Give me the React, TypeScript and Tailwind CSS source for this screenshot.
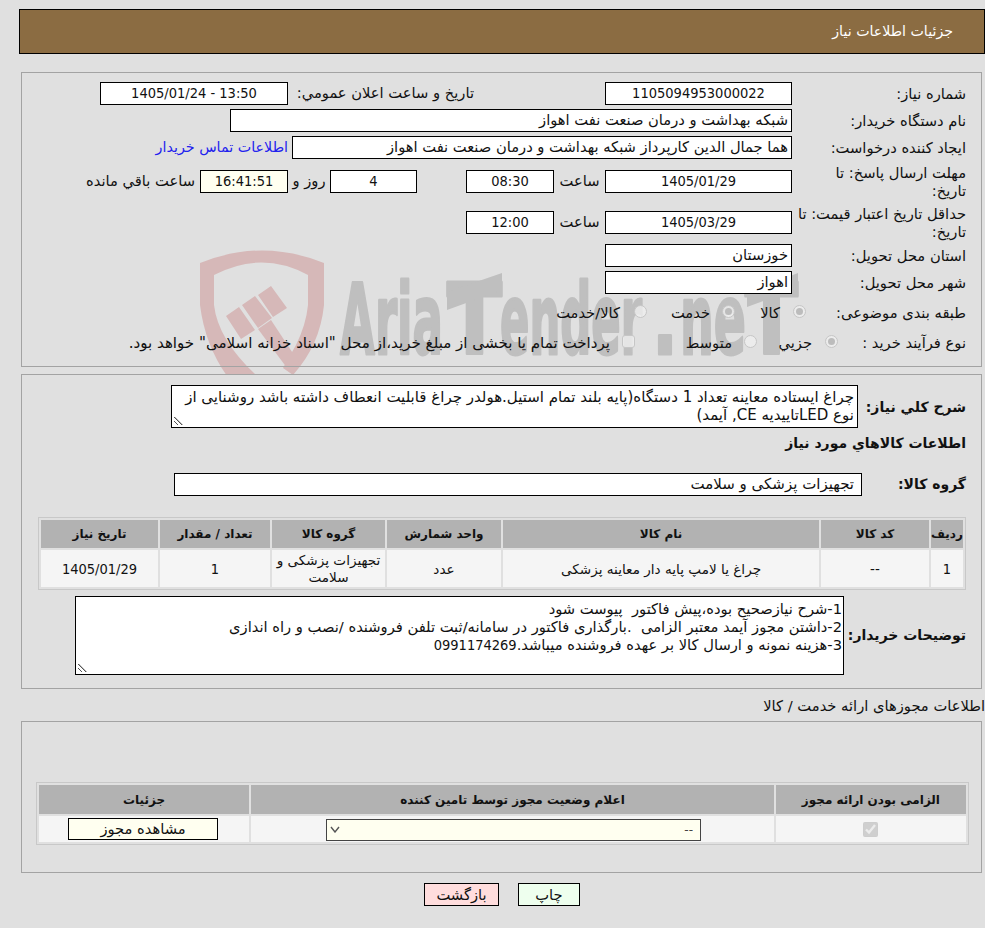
import type { ReactNode } from "react";

const digits = "[font-stretch:condensed] text-[14.5px]";
const boldLabel = "font-bold text-[14px]";

function Box({ w, children, bg = "bg-white", align = "text-center", num }: { w: string; children?: ReactNode; bg?: string; align?: string; num?: boolean }) {
  return (
    <div className={`${w} h-[23px] shrink-0 border border-black ${bg} ${align} ${num ? digits : ""} px-[3px] leading-[20px] whitespace-nowrap overflow-hidden`}>
      {children}
    </div>
  );
}

function Label({ children }: { children: ReactNode }) {
  return <div className="w-[189px] shrink-0 pr-[15px] leading-[18px] whitespace-nowrap">{children}</div>;
}

function Radio({ on, square }: { on?: boolean; square?: boolean }) {
  return (
    <span className={`w-[13px] h-[13px] mb-[3px] shrink-0 border border-[#c6c6c6] bg-[#efefef]/80 flex items-center justify-center ${square ? "rounded-[3px]" : "rounded-full"}`}>
      {on && <span className="w-[7px] h-[7px] rounded-full bg-[#bcbcbc]" />}
    </span>
  );
}

function Grip() {
  return (
    <svg className="absolute left-px bottom-px" width="11" height="11" viewBox="0 0 11 11">
      <path d="M1 2 L9 10 M1 6 L5 10" stroke="#555" strokeWidth="1" />
      <path d="M2 2 L10 10" stroke="#bbb" strokeWidth="1" />
    </svg>
  );
}

function Watermark() {
  const font = {
    fill: "#bfbfbf",
    stroke: "#bfbfbf",
    strokeWidth: 3,
    strokeLinejoin: "round" as const,
    fontFamily: "'DejaVu Sans', sans-serif",
    fontWeight: "bold",
    fontSize: 98,
    lengthAdjust: "spacingAndGlyphs" as const,
  };
  return (
    <svg className="absolute left-0 top-0 z-0 [direction:ltr]" width="985" height="400" viewBox="0 0 985 400">
      {/* shield */}
      <path
        d="M200 263 Q262 238 324 263 L324 305 Q320 345 293 375 L283 368 L296 345 Q306 325 308 305 L308 275 Q262 250 214 275 L214 305 Q218 340 257 376 L227 376 Q205 345 200 305 Z"
        fill="#d6b8b8"
      />
      {/* gavel */}
      <path d="M226 316 L239 307 L255 330 L241 339 Z M242 305 L255 296 L272 318 L258 328 Z M258 295 L271 286 L287 308 L273 317 Z" fill="#d6b8b8" />
      <path d="M258 329 L271 320 L300 364 L290 372 Z" fill="#d6b8b8" />
      <text x="340" y="354" textLength="103" {...font}>Aria</text>
      <text x="447" y="354" textLength="55" {...font}>T</text>
      <text x="500" y="354" textLength="142" {...font}>ender</text>
      <text x="652" y="354" textLength="26" {...font}>.</text>
      <text x="680" y="354" textLength="66" {...font}>ne</text>
      <text x="745" y="354" textLength="53" {...font}>T</text>
      <path d="M447 292 L502 273 L502 290 L447 310 Z M747 293 L798 273 L798 288 L747 307 Z" fill="#bfbfbf" />
    </svg>
  );
}

const headers = [
  { t: "رديف", w: "w-[32px]" },
  { t: "کد کالا", w: "w-[108px]" },
  { t: "نام کالا", w: "w-[316px]" },
  { t: "واحد شمارش", w: "w-[114px]" },
  { t: "گروه کالا", w: "w-[113px]" },
  { t: "تعداد / مقدار", w: "w-[110px]" },
  { t: "تاریخ نیاز", w: "w-[117px]" },
];
const row = ["1", "--", "چراغ یا لامپ پایه دار معاینه پزشکی", "عدد", "تجهیزات پزشکی و سلامت", "1", "1405/01/29"];

export default function App() {
  return (
    <div dir="rtl" className="relative w-[985px] h-[928px] overflow-hidden bg-[#e0e0e0] text-[14.7px] text-[#111] [font-family:'DejaVu_Sans',sans-serif]">
      <Watermark />

      <div className="relative z-10 h-[45px] mt-[9px] ml-[19px] border border-black bg-[#8b6c42] text-white text-[14.2px] flex items-center pr-[31px]">
        جزئیات اطلاعات نیاز
      </div>

      {/* main info */}
      <div className="relative z-10 mt-[18px] ml-[21px] mr-[3px] h-[295px] border border-[#a3a3a3] pt-[9px]">
        <div className="flex items-center h-[23px]">
          <Label>شماره نیاز:</Label>
          <Box w="w-[187px]" num>1105094953000022</Box>
          <div className="mr-[131px] ml-[5px] whitespace-nowrap w-[181px]">تاریخ و ساعت اعلان عمومي:</div>
          <Box w="w-[188px]" num>13:50 - 1405/01/24</Box>
        </div>
        <div className="flex items-center h-[23px] mt-[4px]">
          <Label>نام دستگاه خریدار:</Label>
          <Box w="w-[562px]" align="text-right">شبکه بهداشت و درمان صنعت نفت اهواز</Box>
        </div>
        <div className="flex items-center h-[23px] mt-[4px]">
          <Label>ایجاد کننده درخواست:</Label>
          <Box w="w-[500px]" align="text-right">هما جمال الدین کارپرداز شبکه بهداشت و درمان صنعت نفت اهواز</Box>
          <a className="mr-[4px] text-[14.3px] text-[#2222ee] whitespace-nowrap">اطلاعات تماس خریدار</a>
        </div>
        <div className="flex items-center h-[37px] mt-[4px]">
          <Label>مهلت ارسال پاسخ: تا<br />تاریخ:</Label>
          <Box w="w-[187px]" num>1405/01/29</Box>
          <div className="w-[51px] text-center">ساعت</div>
          <Box w="w-[88px]" num>08:30</Box>
          <div className="w-[49px]" />
          <Box w="w-[87px]" num>4</Box>
          <div className="w-[42px] text-center">روز و</div>
          <Box w="w-[88px]" bg="bg-[#fffff0]" num>16:41:51</Box>
          <div className="mr-[5px] whitespace-nowrap">ساعت باقي مانده</div>
        </div>
        <div className="flex items-center h-[37px] mt-[4px]">
          <Label>حداقل تاریخ اعتبار قیمت: تا<br />تاریخ:</Label>
          <Box w="w-[187px]" num>1405/03/29</Box>
          <div className="w-[51px] text-center">ساعت</div>
          <Box w="w-[88px]" num>12:00</Box>
        </div>
        <div className="flex items-center h-[23px] mt-[3px]">
          <Label>استان محل تحویل:</Label>
          <Box w="w-[187px]" align="text-right">خوزستان</Box>
        </div>
        <div className="flex items-center h-[23px] mt-[4px]">
          <Label>شهر محل تحویل:</Label>
          <Box w="w-[187px]" align="text-right">اهواز</Box>
        </div>
        <div className="flex items-center h-[20px] mt-[9px]">
          <div className="w-[175px] shrink-0 pr-[15px] whitespace-nowrap">طبقه بندی موضوعی:</div>
          <Radio on />
          <span className="mr-[13px] w-[20px] whitespace-nowrap">کالا</span>
          <div className="w-[25px]" />
          <Radio on />
          <span className="mr-[12px] w-[40px] whitespace-nowrap">خدمت</span>
          <div className="w-[23px]" />
          <Radio />
          <span className="mr-[14px] whitespace-nowrap">کالا/خدمت</span>
        </div>
        <div className="flex items-center h-[20px] mt-[10px]">
          <div className="w-[143px] shrink-0 pr-[15px] whitespace-nowrap">نوع فرآیند خرید :</div>
          <Radio on />
          <span className="mr-[13px] w-[35px] whitespace-nowrap">جزیي</span>
          <div className="w-[20px]" />
          <Radio />
          <span className="mr-[12px] w-[45px] whitespace-nowrap">متوسط</span>
          <div className="w-[52px]" />
          <Radio square />
          <span className="mr-[12px] text-[15.1px] whitespace-nowrap">پرداخت تمام یا بخشی از مبلغ خرید،از محل "اسناد خزانه اسلامی" خواهد بود.</span>
        </div>
      </div>

      {/* description and goods */}
      <div className="relative z-10 mt-[7px] ml-[21px] mr-[3px] h-[315px] border border-[#a3a3a3] bg-[#e0e0e0]">
        <div className="flex items-center mt-[10px] h-[43px]">
          <div className={`w-[123px] shrink-0 pr-[15px] pt-[2px] whitespace-nowrap ${boldLabel}`}>شرح کلي نیاز:</div>
          <div className="relative w-[687px] h-[43px] border border-black bg-white px-[3px] pt-[2px] pl-[12px] text-[15px] leading-[18px]">
            چراغ ایستاده معاینه تعداد 1 دستگاه(پایه بلند تمام استیل.هولدر چراغ قابلیت انعطاف داشته باشد روشنایی از نوع LEDتاییدیه CE, آیمد)
            <Grip />
          </div>
        </div>
        <div className={`pr-[15px] mt-[6px] leading-[18px] ${boldLabel}`}>اطلاعات کالاهاي مورد نیاز</div>
        <div className="flex items-center mt-[21px] h-[23px]">
          <div className={`w-[119px] shrink-0 pr-[15px] whitespace-nowrap ${boldLabel}`}>گروه کالا:</div>
          <div className="w-[688px] h-[23px] border border-black bg-white pr-[7px] text-[15px] leading-[20px]">تجهیزات پزشکی و سلامت</div>
        </div>
        <div className="mt-[21px] mr-[15px] w-[928px] border border-[#c8c8c8] p-[2px]">
          <div className="flex gap-[2px]">
            {headers.map((h) => (
              <div key={h.t} className={`${h.w} h-[28px] bg-[#b2b2b2] font-bold text-[12px] flex items-center justify-center whitespace-nowrap`}>{h.t}</div>
            ))}
          </div>
          <div className="flex gap-[2px] mt-[2px]">
            {headers.map((h, i) => (
              <div key={h.t} className={`${h.w} h-[37px] pt-[1px] bg-[#f5f5f5] flex items-center justify-center text-center leading-[17px] ${i === 0 || i === 5 || i === 6 ? digits : "text-[13.6px]"}`}>{row[i]}</div>
            ))}
          </div>
        </div>
        <div className="flex items-center mt-[6px] h-[79px]">
          <div className={`w-[137px] shrink-0 pr-[15px] whitespace-nowrap ${boldLabel}`}>توضیحات خریدار:</div>
          <div className="relative w-[769px] h-[79px] border border-black bg-white pr-px pl-[3px] pt-[3px] leading-[18px] whitespace-pre-wrap">
            {"1-شرح نیازصحیح بوده،پیش فاکتور  پیوست شود\n2-داشتن مجوز آیمد معتبر الزامی  .بارگذاری فاکتور در سامانه/ثبت تلفن فروشنده /نصب و راه اندازی\n3-هزینه نمونه و ارسال کالا بر عهده فروشنده میباشد."}
            <span className={digits}>0991174269</span>
            <Grip />
          </div>
        </div>
      </div>

      <div className="relative z-10 mt-[5px] h-[24px] leading-[24px] whitespace-nowrap">اطلاعات مجوزهای ارائه خدمت / کالا</div>

      {/* permits */}
      <div className="relative z-10 mt-[3px] ml-[21px] mr-[3px] h-[152px] border border-[#a3a3a3] pt-[60px]">
        <div className="mr-[12px] w-[933px] border border-[#c8c8c8] p-[2px]">
          <div className="flex gap-[2px] font-bold text-[12px]">
            <div className="w-[191px] h-[29px] bg-[#b2b2b2] flex items-center justify-center">الزامی بودن ارائه مجوز</div>
            <div className="w-[525px] h-[29px] bg-[#b2b2b2] flex items-center justify-center">اعلام وضعیت مجوز توسط تامین کننده</div>
            <div className="w-[211px] h-[29px] bg-[#b2b2b2] flex items-center justify-center">جزئیات</div>
          </div>
          <div className="flex gap-[2px] mt-[2px]">
            <div className="w-[191px] h-[26px] bg-[#f5f5f5] flex items-center justify-center">
              <input type="checkbox" checked disabled readOnly className="w-[15px] h-[15px]" />
            </div>
            <div className="w-[525px] h-[26px] bg-[#f5f5f5] flex items-center justify-center">
              <div className="relative w-[375px] h-[22px] ml-[2px]">
                <select className="w-full h-full appearance-none border border-[#444] bg-[#fffff0] text-[12px] text-[#444] px-[7px]">
                  <option>--</option>
                </select>
                <svg className="absolute left-[4px] top-[8px]" width="10" height="7" viewBox="0 0 10 7">
                  <path d="M1 1 L5 6 L9 1" fill="none" stroke="#555" strokeWidth="1.4" />
                </svg>
              </div>
            </div>
            <div className="w-[211px] h-[26px] bg-[#f5f5f5] flex items-center justify-center">
              <button className="w-[150px] h-[22px] mr-[2px] border border-black bg-[#fffff0] leading-[18px]">مشاهده مجوز</button>
            </div>
          </div>
        </div>
      </div>

      <div className="relative z-10 mt-[10px] flex justify-center gap-[19px] pl-[19px]">
        <button className="w-[62px] h-[23px] border border-black bg-[#eeffee] leading-[18px]">چاپ</button>
        <button className="w-[75px] h-[23px] border border-black bg-[#ffdddd] leading-[18px]">بازگشت</button>
      </div>
    </div>
  );
}
